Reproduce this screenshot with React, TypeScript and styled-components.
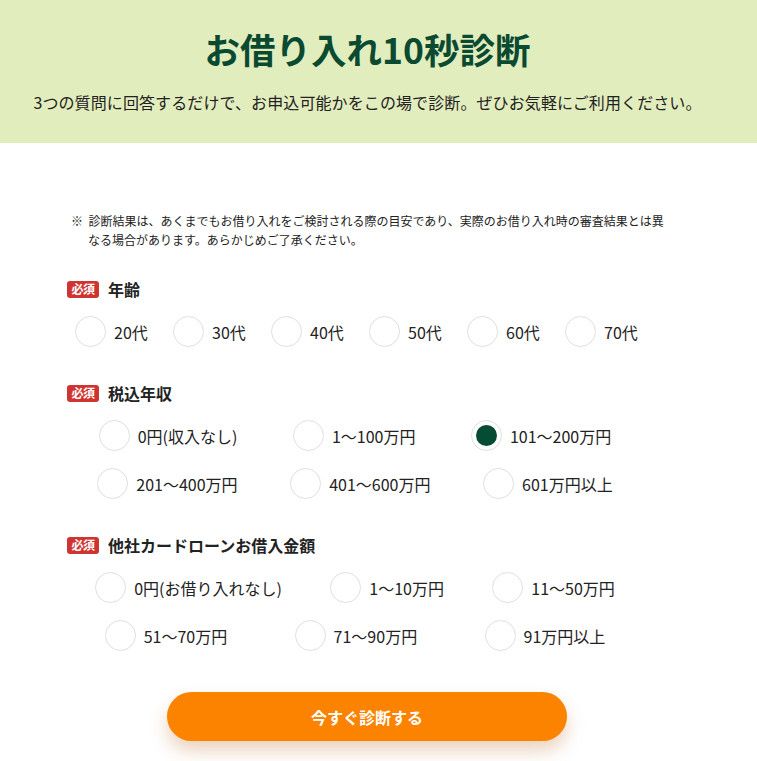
import React, { useState } from "react";
import styled, { createGlobalStyle } from "styled-components";

const GlobalStyle = createGlobalStyle`
  * { box-sizing: border-box; }
  body {
    margin: 0;
    background: #ffffff;
    font-family: "Noto Sans CJK JP", "Noto Sans", sans-serif;
    color: #222222;
  }
`;

const Page = styled.div`
  width: 757px;
  min-height: 761px;
  background: #ffffff;
`;

const Hero = styled.header`
  background: #e2edbe;
  height: 143px;
  padding: 25px 22px 0 0;
  display: flex;
  flex-direction: column;
  align-items: center;
`;

const Title = styled.h1`
  margin: 0;
  font-size: 35.5px;
  line-height: 48px;
  font-weight: 700;
  color: #0a4a31;
`;

const Lead = styled.p`
  margin: 17px 0 0;
  font-size: 16px;
  line-height: 24px;
  color: #222222;
  letter-spacing: 0.1px;
`;

const Main = styled.main`
  width: 600px;
  margin-left: 67px;
  padding-top: 68px;
  padding-bottom: 20px;
`;

const Notice = styled.p`
  margin: 0 0 0 4px;
  width: 596px;
  padding-left: 17px;
  text-indent: -17px;
  font-size: 12px;
  line-height: 19px;
  color: #222222;
`;

const Section = styled.section<{ $top: number }>`
  margin-top: ${(p) => p.$top}px;
`;

const LabelRow = styled.div`
  display: flex;
  align-items: center;
  gap: 9px;
  height: 24px;
  margin-bottom: 15px;
`;

const Badge = styled.span`
  display: inline-flex;
  align-items: center;
  justify-content: center;
  width: 32px;
  height: 17px;
  border-radius: 3px;
  background: #cf3430;
  color: #ffffff;
  font-size: 12px;
  font-weight: 700;
  line-height: 1;
  letter-spacing: -0.5px;
`;

const LabelText = styled.span`
  font-size: 16px;
  font-weight: 700;
  color: #222222;
`;

const AgeGrid = styled.div`
  display: grid;
  grid-template-columns: repeat(6, 98px);
  padding-left: 8px;
`;

const Rows = styled.div`
  display: flex;
  flex-direction: column;
  gap: 17px;
  margin-left: 4px;
  width: 568px;
`;

const Row = styled.div`
  display: flex;
  justify-content: space-around;
  align-items: center;
`;

const Option = styled.label`
  display: inline-flex;
  align-items: center;
  gap: 8px;
  cursor: pointer;
  font-size: 16px;
  line-height: 24px;
  color: #222222;
  white-space: nowrap;
`;

const Circle = styled.span<{ $checked: boolean }>`
  width: 31px;
  height: 31px;
  border-radius: 50%;
  border: 1px solid #dce1df;
  background: #ffffff;
  display: inline-flex;
  align-items: center;
  justify-content: center;
  flex-shrink: 0;
  &::after {
    content: "";
    width: 21px;
    height: 21px;
    border-radius: 50%;
    background: ${(p) => (p.$checked ? "#064b33" : "transparent")};
  }
`;

const HiddenInput = styled.input`
  position: absolute;
  opacity: 0;
  width: 0;
  height: 0;
`;

const ButtonWrap = styled.div`
  display: flex;
  justify-content: center;
  margin-top: 41px;
`;

const Submit = styled.button`
  width: 400px;
  height: 49px;
  border: none;
  border-radius: 25px;
  background: #fb8300;
  color: #ffffff;
  font-family: "Noto Sans CJK JP", sans-serif;
  font-size: 16px;
  font-weight: 700;
  box-shadow: 0 10px 18px rgba(190, 110, 40, 0.3);
  cursor: pointer;
`;

type RadioProps = {
  name: string;
  value: string;
  selected: string;
  onSelect: (v: string) => void;
};

function Radio({ name, value, selected, onSelect }: RadioProps) {
  const checked = selected === value;
  return (
    <Option>
      <HiddenInput
        type="radio"
        name={name}
        value={value}
        checked={checked}
        onChange={() => onSelect(value)}
      />
      <Circle $checked={checked} />
      <span>{value}</span>
    </Option>
  );
}

const ages = ["20代", "30代", "40代", "50代", "60代", "70代"];
const incomes = [
  ["0円(収入なし)", "1〜100万円", "101〜200万円"],
  ["201〜400万円", "401〜600万円", "601万円以上"],
];
const loans = [
  ["0円(お借り入れなし)", "1〜10万円", "11〜50万円"],
  ["51〜70万円", "71〜90万円", "91万円以上"],
];

function Label({ text }: { text: string }) {
  return (
    <LabelRow>
      <Badge>必須</Badge>
      <LabelText>{text}</LabelText>
    </LabelRow>
  );
}

export default function App() {
  const [age, setAge] = useState("");
  const [income, setIncome] = useState("101〜200万円");
  const [loan, setLoan] = useState("");

  return (
    <Page>
      <GlobalStyle />
      <Hero>
        <Title>お借り入れ10秒診断</Title>
        <Lead>
          3つの質問に回答するだけで、お申込可能かをこの場で診断。ぜひお気軽にご利用ください。
        </Lead>
      </Hero>
      <Main>
        <Notice>
          ※&nbsp;&nbsp;診断結果は、あくまでもお借り入れをご検討される際の目安であり、実際のお借り入れ時の審査結果とは異なる場合があります。あらかじめご了承ください。
        </Notice>

        <Section $top={28}>
          <Label text="年齢" />
          <AgeGrid>
            {ages.map((a) => (
              <Radio key={a} name="age" value={a} selected={age} onSelect={setAge} />
            ))}
          </AgeGrid>
        </Section>

        <Section $top={34}>
          <Label text="税込年収" />
          <Rows>
            {incomes.map((row, i) => (
              <Row key={i}>
                {row.map((v) => (
                  <Radio key={v} name="income" value={v} selected={income} onSelect={setIncome} />
                ))}
              </Row>
            ))}
          </Rows>
        </Section>

        <Section $top={34}>
          <Label text="他社カードローンお借入金額" />
          <Rows>
            {loans.map((row, i) => (
              <Row key={i}>
                {row.map((v) => (
                  <Radio key={v} name="loan" value={v} selected={loan} onSelect={setLoan} />
                ))}
              </Row>
            ))}
          </Rows>
        </Section>

        <ButtonWrap>
          <Submit type="button">今すぐ診断する</Submit>
        </ButtonWrap>
      </Main>
    </Page>
  );
}
